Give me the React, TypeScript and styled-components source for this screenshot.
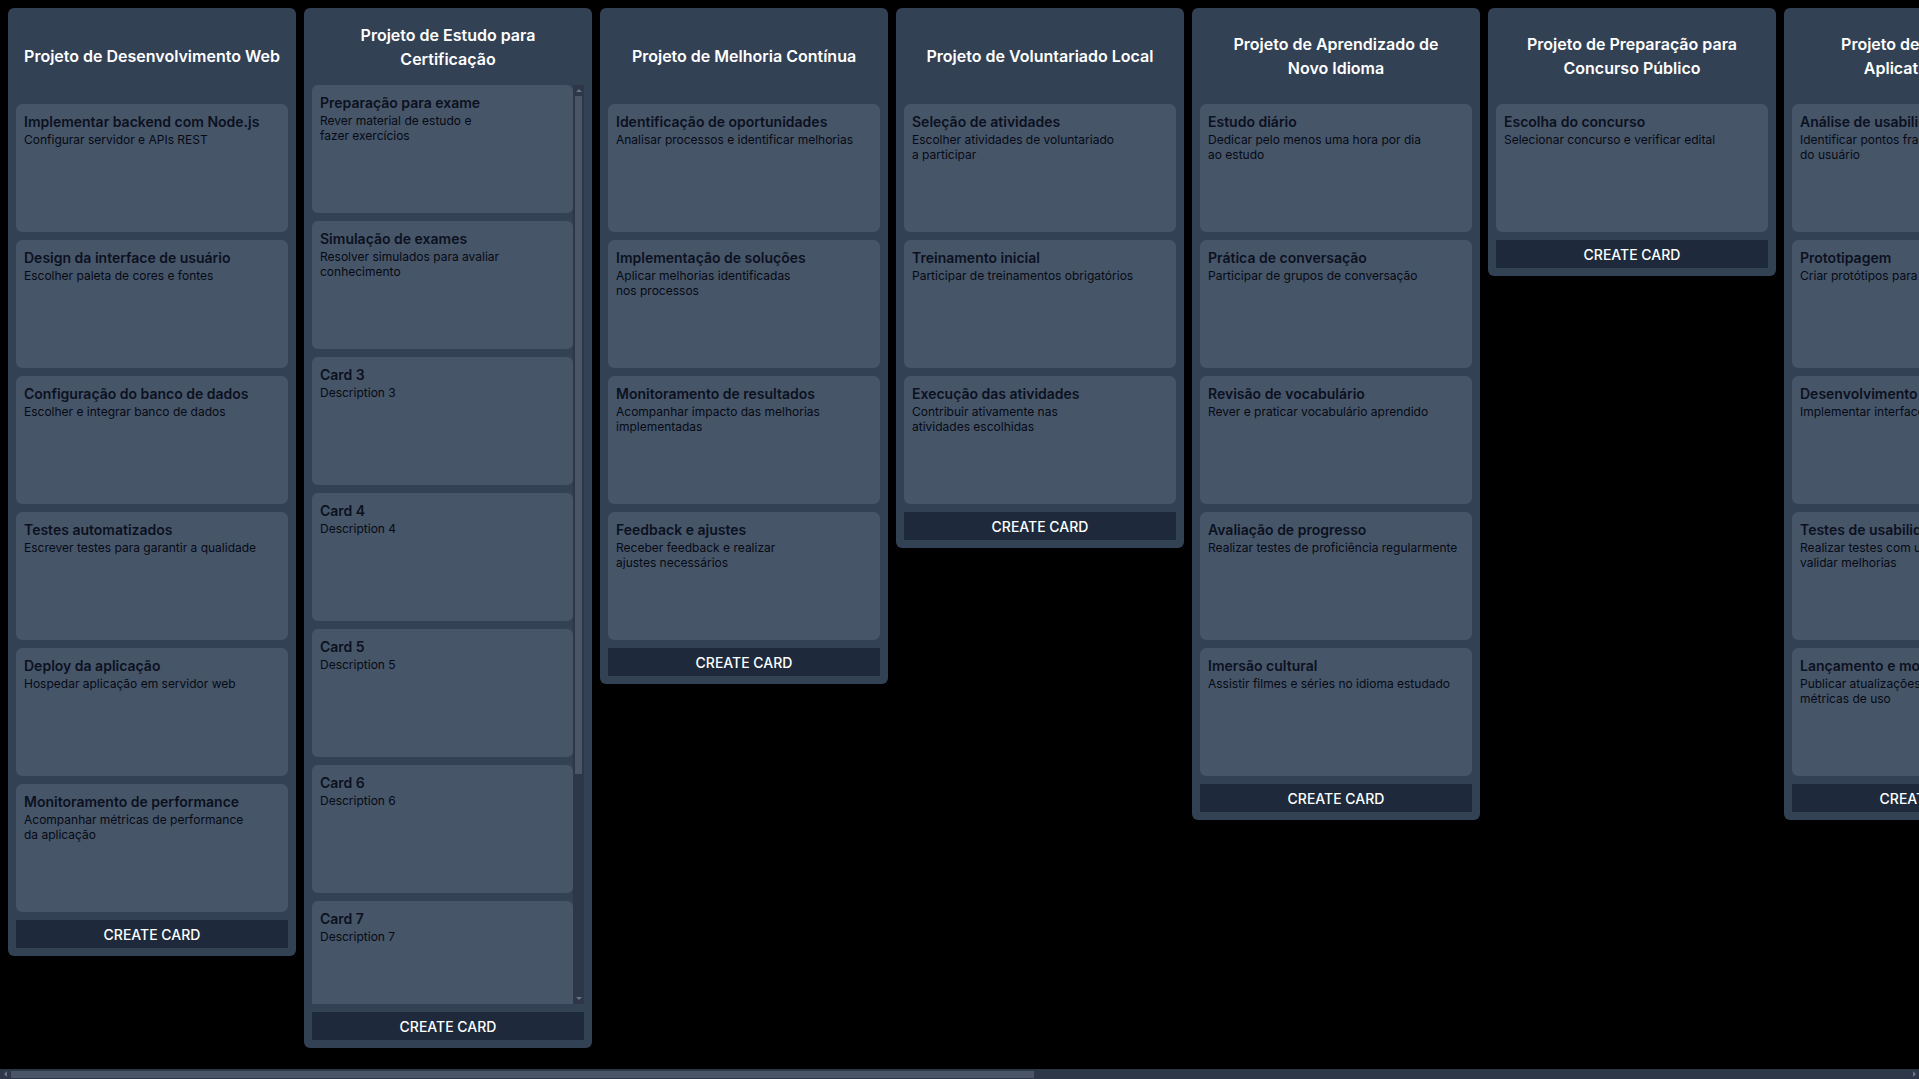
import React from "react";
import styled, { createGlobalStyle } from "styled-components";

const GlobalStyle = createGlobalStyle`
  html, body {
    margin: 0;
    padding: 0;
    background: #000000;
    font-family: Inter, "Noto Sans", "Liberation Sans", sans-serif;
    overflow: hidden;
  }
  * { box-sizing: border-box; }
`;

type Task = { title: string; description: string };
type Project = { title: string; compact?: boolean; tasks: Task[] };

const projects: Project[] = [
  {
    title: "Projeto de Desenvolvimento Web",
    tasks: [
      { title: "Implementar backend com Node.js", description: "Configurar servidor e APIs REST" },
      { title: "Design da interface de usuário", description: "Escolher paleta de cores e fontes" },
      { title: "Configuração do banco de dados", description: "Escolher e integrar banco de dados" },
      { title: "Testes automatizados", description: "Escrever testes para garantir a qualidade" },
      { title: "Deploy da aplicação", description: "Hospedar aplicação em servidor web" },
      { title: "Monitoramento de performance", description: "Acompanhar métricas de performance\nda aplicação" },
    ],
  },
  {
    title: "Projeto de Estudo para Certificação",
    compact: true,
    tasks: [
      { title: "Preparação para exame", description: "Rever material de estudo e\nfazer exercícios" },
      { title: "Simulação de exames", description: "Resolver simulados para avaliar\nconhecimento" },
      { title: "Card 3", description: "Description 3" },
      { title: "Card 4", description: "Description 4" },
      { title: "Card 5", description: "Description 5" },
      { title: "Card 6", description: "Description 6" },
      { title: "Card 7", description: "Description 7" },
      { title: "Card 8", description: "Description 8" },
      { title: "Card 9", description: "Description 9" },
    ],
  },
  {
    title: "Projeto de Melhoria Contínua",
    tasks: [
      { title: "Identificação de oportunidades", description: "Analisar processos e identificar melhorias" },
      { title: "Implementação de soluções", description: "Aplicar melhorias identificadas\nnos processos" },
      { title: "Monitoramento de resultados", description: "Acompanhar impacto das melhorias\nimplementadas" },
      { title: "Feedback e ajustes", description: "Receber feedback e realizar\najustes necessários" },
    ],
  },
  {
    title: "Projeto de Voluntariado Local",
    tasks: [
      { title: "Seleção de atividades", description: "Escolher atividades de voluntariado\na participar" },
      { title: "Treinamento inicial", description: "Participar de treinamentos obrigatórios" },
      { title: "Execução das atividades", description: "Contribuir ativamente nas\natividades escolhidas" },
    ],
  },
  {
    title: "Projeto de Aprendizado de\nNovo Idioma",
    tasks: [
      { title: "Estudo diário", description: "Dedicar pelo menos uma hora por dia\nao estudo" },
      { title: "Prática de conversação", description: "Participar de grupos de conversação" },
      { title: "Revisão de vocabulário", description: "Rever e praticar vocabulário aprendido" },
      { title: "Avaliação de progresso", description: "Realizar testes de proficiência regularmente" },
      { title: "Imersão cultural", description: "Assistir filmes e séries no idioma estudado" },
    ],
  },
  {
    title: "Projeto de Preparação para Concurso Público",
    tasks: [{ title: "Escolha do concurso", description: "Selecionar concurso e verificar edital" }],
  },
  {
    title: "Projeto de Melhoria de\nAplicativo Móvel",
    tasks: [
      { title: "Análise de usabilidade", description: "Identificar pontos fracos na experiência\ndo usuário" },
      { title: "Prototipagem", description: "Criar protótipos para novas funcionalidades" },
      { title: "Desenvolvimento de melhorias", description: "Implementar interface redesenhada" },
      { title: "Testes de usabilidade", description: "Realizar testes com usuários para\nvalidar melhorias" },
      { title: "Lançamento e monitoramento", description: "Publicar atualizações e acompanhar\nmétricas de uso" },
    ],
  },
  {
    title: "Projeto de Organização Pessoal",
    tasks: [
      { title: "Definição de metas", description: "Estabelecer objetivos semanais" },
      { title: "Planejamento da rotina", description: "Organizar agenda e prioridades" },
      { title: "Revisão semanal", description: "Avaliar progresso das metas" },
    ],
  },
  {
    title: "Projeto de Saúde e Bem-estar",
    tasks: [
      { title: "Atividade física", description: "Praticar exercícios três vezes\npor semana" },
      { title: "Alimentação saudável", description: "Planejar refeições equilibradas" },
      { title: "Qualidade do sono", description: "Manter horários regulares de descanso" },
      { title: "Check-up médico", description: "Agendar exames de rotina" },
    ],
  },
  {
    title: "Projeto de Finanças Pessoais",
    tasks: [
      { title: "Controle de gastos", description: "Registrar despesas mensais" },
      { title: "Reserva de emergência", description: "Guardar parte da renda mensal" },
    ],
  },
  {
    title: "Projeto de Leitura",
    tasks: [
      { title: "Lista de livros", description: "Selecionar livros para o ano" },
      { title: "Leitura diária", description: "Ler pelo menos vinte páginas por dia" },
      { title: "Resenhas", description: "Escrever resumo de cada livro lido" },
    ],
  },
  {
    title: "Projeto de Reforma da Casa",
    tasks: [
      { title: "Orçamento", description: "Levantar custos de materiais e\nmão de obra" },
      { title: "Contratação", description: "Escolher profissionais qualificados" },
      { title: "Execução da obra", description: "Acompanhar andamento da reforma" },
      { title: "Acabamento", description: "Finalizar pintura e decoração" },
    ],
  },
];

const COLUMN_WIDTH = 288;
const GAP = 8;
const CARD_HEIGHT = 128;
const COLUMN_MAX_HEIGHT = 1040;
const BUTTON_HEIGHT = 28;

const Shell = styled.div`
  height: 100vh;
  display: flex;
  flex-direction: column;
`;

const Board = styled.main`
  flex: 1 1 auto;
  min-height: 0;
  display: flex;
  align-items: flex-start;
  gap: ${GAP}px;
  padding: 8px;
  overflow: hidden;
`;

const Column = styled.section`
  flex: 0 0 ${COLUMN_WIDTH}px;
  width: ${COLUMN_WIDTH}px;
  max-height: ${COLUMN_MAX_HEIGHT}px;
  display: flex;
  flex-direction: column;
  gap: 8px;
  padding: 8px;
  background: #334155;
  border-radius: 6px;
`;

const Header = styled.h2<{ $compact?: boolean }>`
  flex: 0 0 auto;
  height: ${(p) => (p.$compact ? "61px" : "80px")};
  margin: 0;
  display: flex;
  align-items: center;
  justify-content: center;
  text-align: center;
  white-space: pre-line;
  color: #ffffff;
  font-size: 16px;
  font-weight: 600;
  line-height: 24px;
`;

const ListArea = styled.div`
  flex: 1 1 auto;
  min-height: 0;
  display: flex;
`;

const CardList = styled.div`
  flex: 1 1 auto;
  min-width: 0;
  display: flex;
  flex-direction: column;
  gap: 8px;
  overflow: hidden;
`;

const Card = styled.article`
  flex: 0 0 ${CARD_HEIGHT}px;
  height: ${CARD_HEIGHT}px;
  padding: 8px;
  background: #475569;
  border-radius: 6px;
`;

const CardTitle = styled.h3`
  margin: 0;
  color: #0b1120;
  font-size: 14px;
  font-weight: 600;
  line-height: 20px;
`;

const CardDescription = styled.p`
  margin: 0;
  color: #050a14;
  font-size: 12px;
  line-height: 15px;
  white-space: pre-line;
`;

const CreateButton = styled.button`
  flex: 0 0 ${BUTTON_HEIGHT}px;
  height: ${BUTTON_HEIGHT}px;
  width: 100%;
  border: none;
  background: #1e293b;
  color: #ffffff;
  font-family: inherit;
  font-size: 14px;
  font-weight: 500;
  text-transform: uppercase;
  cursor: pointer;
`;

/* Scrollbars drawn as part of the UI */
const VTrack = styled.div`
  flex: 0 0 11px;
  width: 11px;
  display: flex;
  flex-direction: column;
  background: #2d3748;
`;

const VArrowCell = styled.div<{ $down?: boolean }>`
  flex: 0 0 11px;
  display: flex;
  align-items: center;
  justify-content: center;
  &::after {
    content: "";
    width: 0;
    height: 0;
    border-left: 3.5px solid transparent;
    border-right: 3.5px solid transparent;
    ${(p) =>
      p.$down ? "border-top: 3.5px solid #64748b;" : "border-bottom: 3.5px solid #64748b;"}
  }
`;

const VSpace = styled.div`
  flex: 1 1 auto;
  display: flex;
  flex-direction: column;
  padding: 0 2px;
`;

const VThumb = styled.div`
  background: #4a5568;
  flex: 0 0 auto;
`;

const HTrack = styled.div`
  flex: 0 0 10px;
  height: 10px;
  display: flex;
  background: #2d3748;
`;

const HArrowCell = styled.div<{ $right?: boolean }>`
  flex: 0 0 10px;
  display: flex;
  align-items: center;
  justify-content: center;
  &::after {
    content: "";
    width: 0;
    height: 0;
    border-top: 3.5px solid transparent;
    border-bottom: 3.5px solid transparent;
    ${(p) =>
      p.$right ? "border-left: 3.5px solid #64748b;" : "border-right: 3.5px solid #64748b;"}
  }
`;

const HSpace = styled.div`
  flex: 1 1 auto;
  display: flex;
  padding: 2px 0 1px 1px;
`;

const HThumb = styled.div`
  background: #4a5568;
  flex: 0 0 auto;
`;

function VerticalScrollbar({ ratio }: { ratio: number }) {
  return (
    <VTrack>
      <VArrowCell />
      <VSpace>
        <VThumb style={{ height: `${ratio * 100}%` }} />
      </VSpace>
      <VArrowCell $down />
    </VTrack>
  );
}

function HorizontalScrollbar({ ratio }: { ratio: number }) {
  return (
    <HTrack>
      <HArrowCell />
      <HSpace>
        <HThumb style={{ width: `${ratio * 100}%` }} />
      </HSpace>
      <HArrowCell $right />
    </HTrack>
  );
}

function ProjectColumn({ project }: { project: Project }) {
  const headerHeight = project.compact ? 61 : 80;
  const contentHeight =
    project.tasks.length * CARD_HEIGHT + (project.tasks.length - 1) * 8;
  const visibleHeight = COLUMN_MAX_HEIGHT - 16 - headerHeight - 16 - BUTTON_HEIGHT;
  const overflowing = contentHeight > visibleHeight;
  return (
    <Column>
      <Header $compact={project.compact}>{project.title}</Header>
      <ListArea>
        <CardList>
          {project.tasks.map((task) => (
            <Card key={task.title}>
              <CardTitle>{task.title}</CardTitle>
              <CardDescription>{task.description}</CardDescription>
            </Card>
          ))}
        </CardList>
        {overflowing && <VerticalScrollbar ratio={visibleHeight / contentHeight} />}
      </ListArea>
      <CreateButton>Create card</CreateButton>
    </Column>
  );
}

export default function App() {
  const boardWidth = 16 + projects.length * COLUMN_WIDTH + (projects.length - 1) * GAP;
  const viewport = typeof window !== "undefined" ? window.innerWidth : 1919;
  const ratio = Math.min(1, viewport / boardWidth);
  return (
    <>
      <GlobalStyle />
      <Shell>
        <Board>
          {projects.map((project) => (
            <ProjectColumn key={project.title} project={project} />
          ))}
        </Board>
        <HorizontalScrollbar ratio={ratio} />
      </Shell>
    </>
  );
}
